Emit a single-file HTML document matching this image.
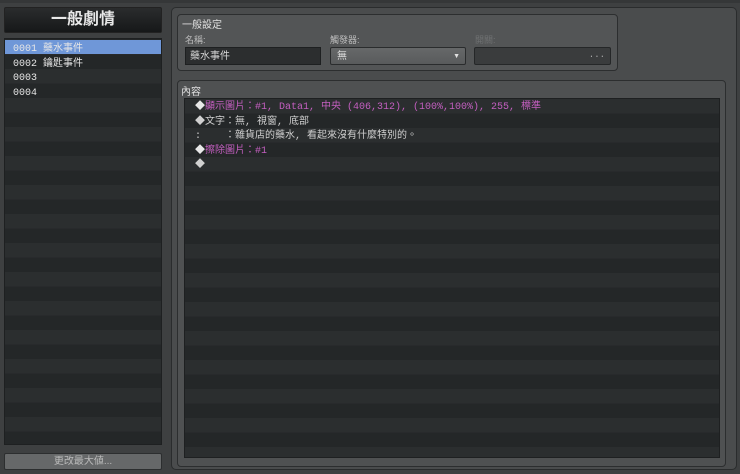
<!DOCTYPE html>
<html><head><meta charset="utf-8"><style>
*{margin:0;padding:0;box-sizing:border-box}
body{width:740px;height:474px;background:#3e4041;font-family:"Liberation Mono","Noto Sans CJK TC",monospace;font-size:10px;color:#d0d0d0;position:relative;overflow:hidden}
.abs{position:absolute}
.stripe{background:repeating-linear-gradient(#2b2e2f 0,#2b2e2f 14.5px,#242728 14.5px,#242728 29px)}
.sans{font-family:"Liberation Sans","Noto Sans CJK TC",sans-serif}
.ln{display:block;height:14.5px;line-height:14.5px;white-space:pre}
</style></head><body>
<div class="abs" style="left:0;top:0;width:740px;height:3px;background:#353738"></div>
<div class="abs sans" style="left:4px;top:7px;width:158px;height:26px;background:linear-gradient(#2a2c2d,#161819);border:1px solid #222;border-radius:2px;color:#e8e8e8;font-size:16px;text-align:center;line-height:24px;font-weight:bold">一般劇情</div>
<div class="abs stripe" style="left:4px;top:38px;width:158px;height:407px;border:1px solid #1e2021;background-position:0 1px"></div>
<div class="abs" style="left:5px;top:40px;width:156px;height:14px;background:#6f97d8"></div>
<div class="abs" style="left:13px;top:43px;color:#e6e6e6"><span class="ln">0001 藥水事件</span><span class="ln">0002 鑰匙事件</span><span class="ln">0003</span><span class="ln">0004</span></div>
<div class="abs sans" style="left:4px;top:453px;width:158px;height:17px;background:#666869;border:1px solid #2c2e2f;border-radius:2px;color:#bbb;font-size:10px;text-align:center;line-height:15px">更改最大値...</div>
<div class="abs" style="left:171px;top:7px;width:566px;height:463px;background:#4a4c4d;border:1px solid #2a2c2d;border-radius:5px"></div>
<div class="abs" style="left:177px;top:14px;width:441px;height:57px;background:#535556;border:1px solid #2c2e2f;border-radius:4px"></div>
<div class="abs sans" style="left:182px;top:16px;color:#e0e0e0;font-size:10px">一般設定</div>
<div class="abs sans" style="left:185px;top:33px;color:#bdbdbd;font-size:9px">名稱:</div>
<div class="abs sans" style="left:185px;top:47px;width:136px;height:18px;background:#2c2e2f;border:1px solid #1e2021;color:#d8d8d8;font-size:10px;line-height:17px;padding-left:4px">藥水事件</div>
<div class="abs sans" style="left:330px;top:33px;color:#bdbdbd;font-size:9px">觸發器:</div>
<div class="abs sans" style="left:330px;top:47px;width:136px;height:18px;background:linear-gradient(#666869,#595b5c);border:1px solid #2a2c2d;border-radius:2px;color:#e0e0e0;font-size:10px;line-height:17px;padding-left:6px">無<span style="position:absolute;right:5px;top:0;font-size:7px">▼</span></div>
<div class="abs sans" style="left:475px;top:33px;color:#6f7172;font-size:9px">開關:</div>
<div class="abs" style="left:474px;top:47px;width:137px;height:18px;background:#3a3c3d;border:1px solid #252728;border-radius:2px;color:#aaa;font-size:9px;line-height:14px;text-align:right;padding-right:5px">...</div>
<div class="abs" style="left:177px;top:80px;width:549px;height:387px;background:#4f5152;border:1px solid #2c2e2f;border-radius:4px"></div>
<div class="abs sans" style="left:181px;top:83px;color:#e0e0e0;font-size:10px">內容</div>
<div class="abs stripe" style="left:184px;top:98px;width:536px;height:360px;border:1px solid #1e2021"></div>
<div class="abs" style="left:195px;top:101px;font-size:10px;color:#d0d0d0"><span class="ln"><span style="color:#e8e8e8">◆</span><span style="color:#c45fc0">顯示圖片：#1, Data1, 中央 (406,312), (100%,100%), 255, 標準</span></span><span class="ln">◆文字：無, 視窗, 底部</span><span class="ln">:    ：雜貨店的藥水, 看起來沒有什麼特別的。</span><span class="ln"><span style="color:#e8e8e8">◆</span><span style="color:#c45fc0">擦除圖片：#1</span></span><span class="ln">◆</span></div>
</body></html>
